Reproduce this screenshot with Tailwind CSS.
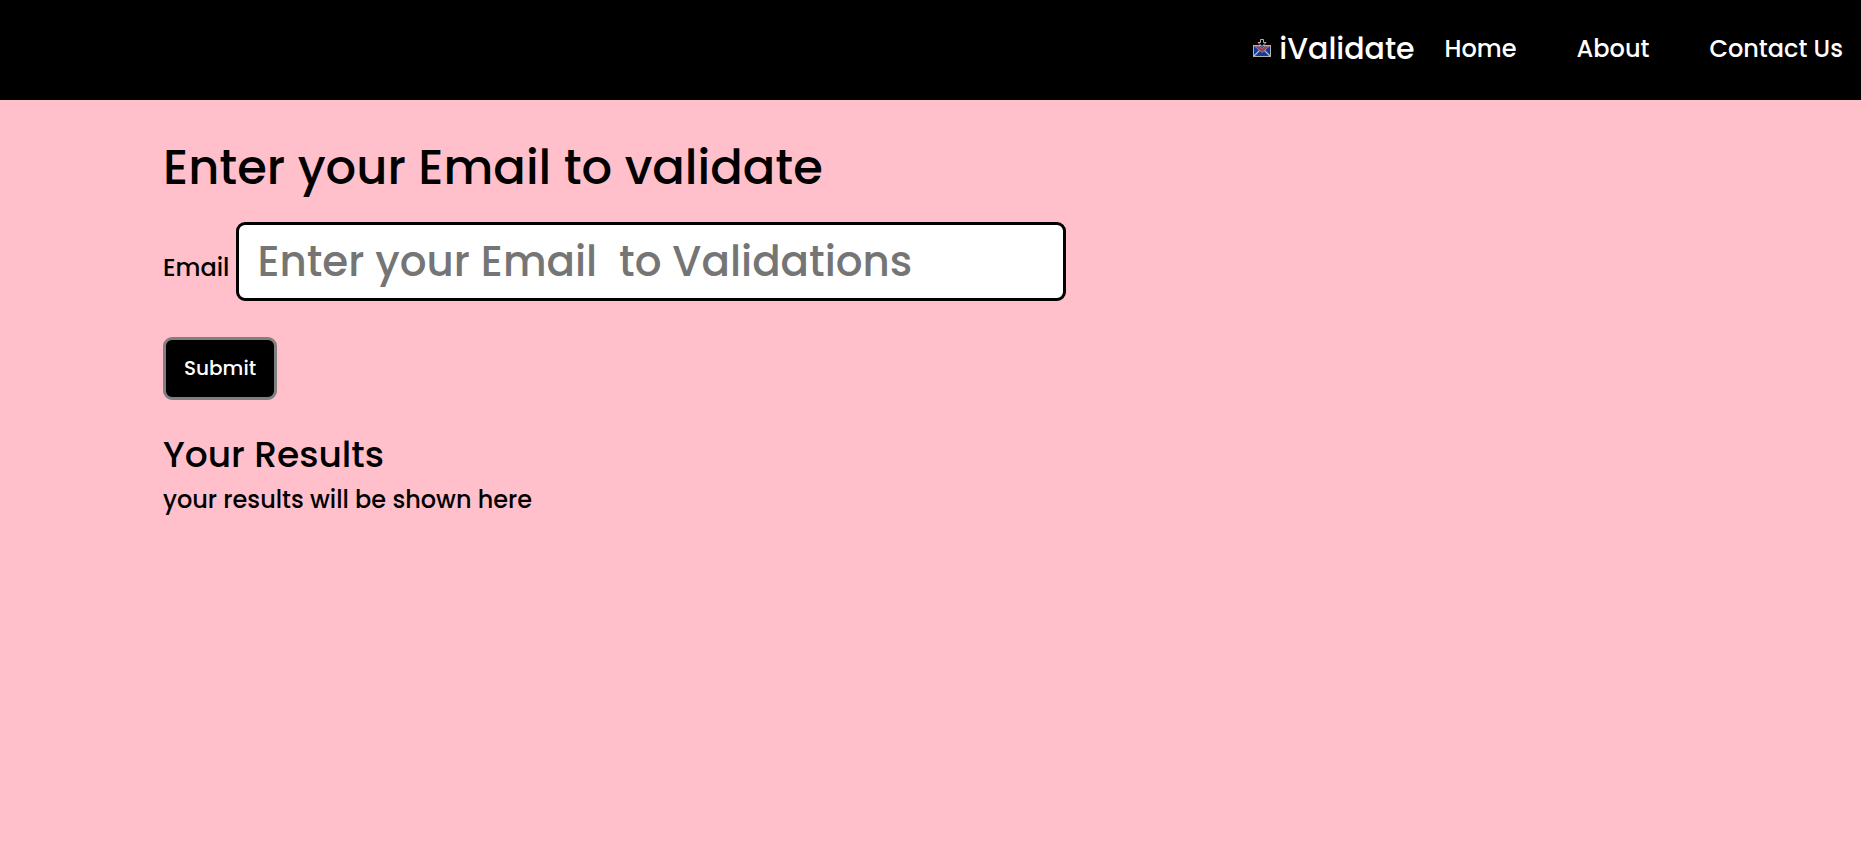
<!DOCTYPE html>
<html lang="en">
<head>
<meta charset="utf-8">
<meta name="viewport" content="width=device-width, initial-scale=1">
<title>iValidate</title>
<script src="https://cdn.jsdelivr.net/npm/@tailwindcss/browser@4"></script>
</head>
<body class="min-h-screen bg-[#ffc0cb] font-['Poppins','Inter',sans-serif] font-medium text-black">
<header class="flex h-[100px] items-center justify-end bg-black pr-[18px] pb-[2px] text-white">
  <nav class="flex items-center">
    <a href="#" class="mr-[30px] flex items-center gap-2 text-3xl leading-10">
      <svg class="mb-[2px] size-[18px]" viewBox="0 0 18 18" aria-hidden="true">
        <path fill="#b9b0aa" d="M0 6h18v12H0z"/>
        <path fill="#123a9c" d="M1 7h16v10H1z"/>
        <path fill="none" stroke="#b4b8cc" stroke-width="1.200" d="M1 17l5.500-5.500M17 17l-5.500-5.500"/>
        <path fill="#a33c48" stroke="#b9b0aa" stroke-width=".6" d="M1.500 7H6l3 2.500L12 7h4.500L9 13.500z"/>
        <path fill="#000" stroke="#cfc3b8" stroke-width=".9" d="M7.500.5h3v3h2.500L9 7.500 5 3.500h2.500z"/>
      </svg>
      <span>iValidate</span>
    </a>
    <ul class="flex gap-[60px] text-2xl">
      <li><a href="#">Home</a></li>
      <li><a href="#">About</a></li>
      <li><a href="#">Contact Us</a></li>
    </ul>
  </nav>
</header>
<main class="px-[163px] pt-8 text-2xl">
  <h1 class="text-5xl leading-[72px]">Enter your Email to validate</h1>
  <form class="mt-[18px]">
    <div class="flex items-baseline gap-[7px]">
      <label for="email">Email</label>
      <input id="email" type="email" placeholder="Enter your Email  to Validations" class="h-[79px] w-full max-w-[830px] rounded-[9px] border-3 border-black bg-white px-[18px] text-[42px] placeholder:text-[#757575]">
    </div>
    <button type="submit" class="mt-9 h-[63px] rounded-[9px] border-3 border-[#808080] bg-black px-[18px] pb-[2px] text-xl text-white">Submit</button>
  </form>
  <section class="mt-7">
    <h2 class="text-4xl leading-[54px]">Your Results</h2>
    <p class="leading-9">your results will be shown here</p>
  </section>
</main>
</body>
</html>
